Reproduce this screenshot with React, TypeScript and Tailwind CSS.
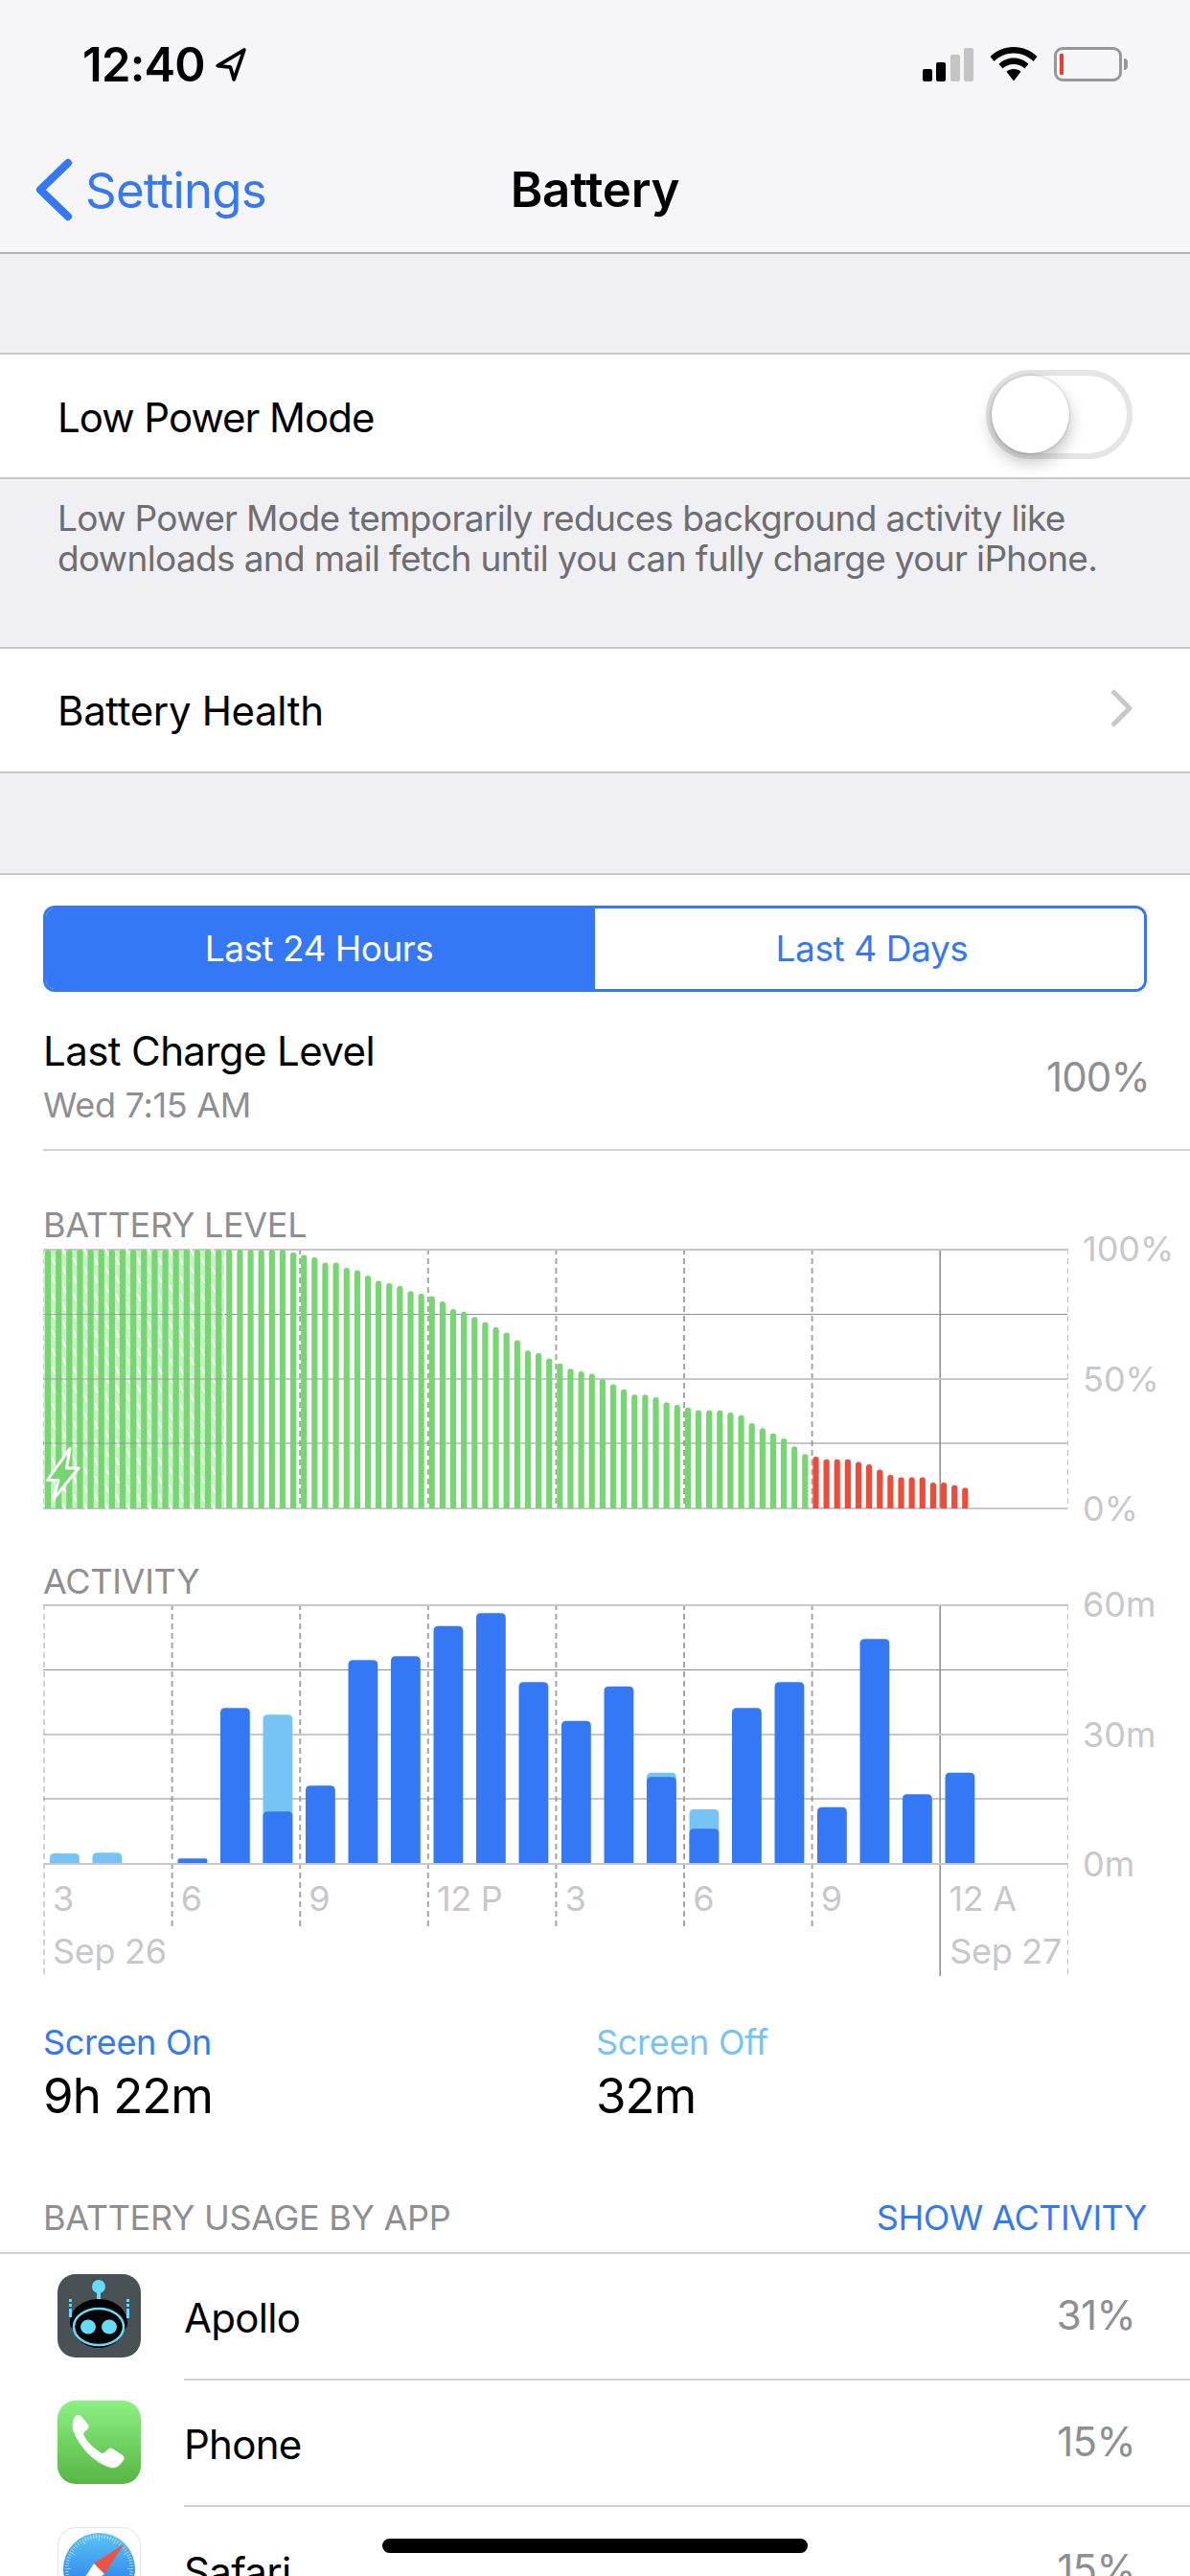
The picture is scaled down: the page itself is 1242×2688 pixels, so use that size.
import React from "react";

const FONT = "font-['Inter','Liberation_Sans',sans-serif]";

const GREEN = "#76d672";
const RED = "#ef4b38";
const BLUE = "#3478f6";
const SKY = "#76c4f6";
const STEP = 133.6;

// battery % per 15 minute slot
const level: number[] = [
  ...Array(23).fill(100),
  99, 98, 97, 95, 95, 93, 92, 90, 88, 87, 86, 84, 83, 82, 80, 77, 76, 74, 72, 70, 68, 65, 61, 60, 58, 56, 54, 53, 52,
  50, 48, 46, 44, 44, 43, 41, 40, 39, 38, 38, 38, 37, 36, 33, 31, 29, 27, 24, 21,
  20, 19, 19, 19, 18, 17, 15, 13, 12, 12, 12, 10, 10, 9, 8,
];

// [screen on px, screen off px] per hour
const activity: [number, number][] = [
  [0, 10], [0, 10.7], [0, 0], [4.7, 0], [161.7, 0], [53.7, 154.7], [80.7, 0], [211.7, 0], [215.7, 0], [247.3, 0], [260.7, 0],
  [188.7, 0], [148.3, 0], [184.3, 0], [89.7, 94.3], [35.7, 56], [161.7, 0], [188.7, 0], [58.3, 0], [233.7, 0], [71.7, 0], [94.3, 0],
];

const topRound = (x: number, y: number, w: number, h: number, r: number) =>
  `M${x} ${y + h}V${y + r}Q${x} ${y} ${x + r} ${y}H${x + w - r}Q${x + w} ${y} ${x + w} ${y + r}V${y + h}Z`;

function Grid({ tick, tall }: { tick: number; tall: number }) {
  return (
    <>
      {[0, 1, 2, 3, 4, 5, 6, 7, 8].map((i) => {
        const x = 1 + i * STEP;
        if (i === 7) return <line key={i} x1={x} x2={x} y1={0} y2={tall} stroke="#8a8a8a" strokeWidth={1.5} />;
        const edge = i === 0 || i === 8;
        return (
          <line
            key={i}
            x1={x}
            x2={x}
            y1={0}
            y2={edge ? tall : tick}
            stroke={edge ? "#c4c4c4" : "#a6a6a6"}
            strokeWidth={edge ? 1.5 : 2}
            strokeDasharray="6 4"
          />
        );
      })}
      <line x1={0} x2={1069} y1={1} y2={1} stroke="#c8c8c8" strokeWidth={2} />
      <line x1={0} x2={1069} y1={68.5} y2={68.5} stroke="#8e8e8e" strokeWidth={1.2} />
      <line x1={0} x2={1069} y1={136} y2={136} stroke="#c8c8c8" strokeWidth={2} />
      <line x1={0} x2={1069} y1={203} y2={203} stroke="#8e8e8e" strokeWidth={1.2} />
      <line x1={0} x2={1069} y1={271} y2={271} stroke="#c8c8c8" strokeWidth={2} />
    </>
  );
}

function BatteryChart() {
  const stripes: string[] = [];
  for (let i = 0; i < 17; i++) {
    const gx = 8.4 + i * 11.13;
    for (let y = (i % 2) * 9.5 - 10; y < 270; y += 19) {
      stripes.push(`${gx},${y} ${gx + 1.8},${y} ${gx + 4.9},${y + 8} ${gx + 3.1},${y + 8}`);
    }
  }
  return (
    <svg width={1070} height={272} viewBox="0 0 1070 272" className="block shrink-0">
      <Grid tick={271} tall={271} />
      <rect x={1} y={2} width={188} height={268} fill="#c8efc6" />
      {stripes.map((p) => (
        <polygon key={p} points={p} fill="#fff" />
      ))}
      {level.map((pct, i) => {
        const h = pct * 2.7;
        return (
          <path key={i} d={topRound(2 + i * 11.13, 271 - h, 6.2, h, 3)} fill={i >= 72 ? RED : GREEN} />
        );
      })}
      <line x1={0} x2={188} y1={68.5} y2={68.5} stroke="#8e8e8e" strokeOpacity={0.7} strokeWidth={1.2} />
      <line x1={0} x2={188} y1={136} y2={136} stroke="#9f9f9f" strokeOpacity={0.7} strokeWidth={1.5} />
      <line x1={0} x2={188} y1={203} y2={203} stroke="#8e8e8e" strokeOpacity={0.7} strokeWidth={1.2} />
      <path
        d="M28 208.500 4.500 241.500H16L11 261 37 229H24.500L28 208.500Z"
        fill={GREEN}
        stroke="#fff"
        strokeWidth={3}
        strokeLinejoin="round"
      />
    </svg>
  );
}

function ActivityGrid() {
  return (
    <svg width={1070} height={389} viewBox="0 0 1070 389" className="absolute left-0 top-0">
      <Grid tick={337} tall={388} />
      {activity.map(([on, off], i) => {
        const x = 7 + i * 44.5;
        return (
          <g key={i}>
            {off > 0 && <path d={topRound(x, 270 - off, 30.8, off, 5)} fill={SKY} />}
            {on > 0 && <path d={topRound(x, 270 - on, 30.8, on, on < 8 ? 2 : 5)} fill={BLUE} />}
          </g>
        );
      })}
    </svg>
  );
}

function YLabels({ items }: { items: string[] }) {
  return (
    <div className="ml-[15px] -mt-[18px] flex h-[307px] flex-col justify-between text-[36px] leading-[36px] text-[#c7c7cc]">
      {items.map((t) => (
        <span key={t}>{t}</span>
      ))}
    </div>
  );
}

function ApolloIcon() {
  return (
    <svg viewBox="0 0 87 87" className="h-full w-full">
      <rect width={87} height={87} rx={19} fill="#4a5155" />
      <circle cx={43} cy={13} r={7} fill="#66dcfb" />
      <rect x={41} y={17} width={4} height={12} fill="#66dcfb" />
      <rect x={38.5} y={27} width={9} height={3} rx={1.5} fill="#66dcfb" />
      <path d="M13 51c0-14 13-25 30-25s30 11 30 25c0 3-1 5-3 6-3 12-14 20-27 20s-24-8-27-20c-2-1-3-3-3-6Z" fill="#000" />
      <rect x={12} y={26} width={3} height={3} fill="#66dcfb" />
      <rect x={12} y={31} width={3} height={3} fill="#66dcfb" />
      <rect x={12} y={36} width={3} height={9} fill="#66dcfb" />
      <rect x={72} y={26} width={3} height={3} fill="#66dcfb" />
      <rect x={72} y={31} width={3} height={3} fill="#66dcfb" />
      <rect x={72} y={36} width={3} height={10} fill="#66dcfb" />
      <ellipse cx={43} cy={55} rx={26} ry={19} fill="none" stroke="#66dcfb" strokeWidth={2.5} />
      <ellipse cx={32} cy={55} rx={8} ry={7.5} fill="#66dcfb" />
      <ellipse cx={54} cy={55} rx={8} ry={7.5} fill="#66dcfb" />
    </svg>
  );
}

function PhoneIcon() {
  return (
    <svg viewBox="0 0 87 87" className="h-full w-full">
      <defs>
        <linearGradient id="phoneBg" x1="0" y1="0" x2="0" y2="1">
          <stop offset="0" stopColor="#8cf083" />
          <stop offset="1" stopColor="#57b644" />
        </linearGradient>
      </defs>
      <rect width={87} height={87} rx={19} fill="url(#phoneBg)" />
      <path
        d="M19 16c2-1.500 4-1.500 5.500 0l7 8.500c1.500 2 1.500 3.500 0 5l-3.500 3.500c-1 1-1 2.500-.5 3.500 4 7 10 13 18 18 1 .7 2.500.5 3.500-.5l4-3.500c1.500-1.300 3-1.300 5 0l10 6.500c2 1.500 2.200 3.500.7 5.500-3 4-7 9-12.700 7.500C40 66 24 50 17 33c-2-5-2-13 2-17Z"
        fill="#fff"
      />
    </svg>
  );
}

function SafariIcon() {
  const ticks = Array.from({ length: 72 }, (_, i) => (i * 360) / 72);
  return (
    <svg viewBox="0 0 87 87" className="h-full w-full">
      <defs>
        <linearGradient id="safariBg" x1="0" y1="0" x2="0" y2="1">
          <stop offset="0" stopColor="#5cc3f6" />
          <stop offset="1" stopColor="#1e6fe8" />
        </linearGradient>
      </defs>
      <rect x={0.5} y={0.5} width={86} height={86} rx={19} fill="#fff" stroke="#e2e2e2" />
      <circle cx={43.500} cy={43.500} r={37.500} fill="url(#safariBg)" />
      {ticks.map((a) => (
        <line
          key={a}
          x1={43.5}
          x2={43.5}
          y1={8}
          y2={a % 30 === 0 ? 14 : 11.5}
          stroke="#fff"
          strokeOpacity={0.8}
          strokeWidth={0.7}
          transform={`rotate(${a} 43.5 43.5)`}
        />
      ))}
      <polygon points="69,18 38,38 49,49" fill="#ee5240" />
      <polygon points="18,69 38,38 49,49" fill="#fff" />
    </svg>
  );
}

function AppRow({ name, pct, icon, last }: { name: string; pct: string; icon: React.ReactNode; last?: boolean }) {
  return (
    <div className="flex h-[132px] items-center pl-[60px]">
      <div className="-mt-[3px] h-[87px] w-[87px] shrink-0">{icon}</div>
      <div className={`ml-[45px] flex h-full flex-1 items-center justify-between pr-[57px] ${last ? "" : "border-b-2 border-[#d0d0d3]"}`}>
        <span className="mt-[3px] text-[42px] tracking-[-0.7px] text-black">{name}</span>
        <span className="-mt-[4px] text-[42px] tracking-[-0.7px] text-[#8e8e93]">{pct}</span>
      </div>
    </div>
  );
}

export default function App() {
  return (
    <div className={`relative h-[2688px] w-[1242px] overflow-hidden bg-white ${FONT}`}>
      {/* nav */}
      <header className="h-[265px] border-b-2 border-[#b2b2b2] bg-[#f6f6f8]">
        <div className="flex h-[132px] items-center justify-between pl-[86px] pr-[65px] pt-[2px]">
          <div className="flex items-center gap-[10px]">
            <span className="text-[49px] font-semibold leading-none tracking-[-0.8px] text-black">12:40</span>
            <svg width={33} height={35} viewBox="0 0 31 33">
              <path d="M29 2 3 17.500l12.500 1.500 3.500 12L29 2Z" fill="none" stroke="#000" strokeWidth={3.500} strokeLinejoin="round" />
            </svg>
          </div>
          <div className="flex items-center gap-[17px]">
            <div className="flex h-[35px] items-end gap-[4.500px]">
              <div className="h-[13px] w-[10px] rounded-[2px] bg-black" />
              <div className="h-[20px] w-[10px] rounded-[2px] bg-black" />
              <div className="h-[28px] w-[10px] rounded-[2px] bg-[#c4c4c4]" />
              <div className="h-[35px] w-[10px] rounded-[2px] bg-[#c4c4c4]" />
            </div>
            <svg width={50} height={36} viewBox="0 0 50 36">
              <path d="M25 0C15.500 0 7 3.800 .5 10L4.500 15C10 9.800 17 6.600 25 6.600S40 9.800 45.500 15L49.500 10C43 3.800 34.500 0 25 0Z" fill="#000" />
              <path d="M25 11.500C19 11.500 13.500 13.800 9.500 17.800L13.500 22.500C16.500 19.700 20.500 18 25 18S33.500 19.700 36.500 22.500L40.500 17.800C36.500 13.800 31 11.500 25 11.500Z" fill="#000" />
              <path d="M25 23C22 23 19.500 24 17.500 25.800L25 35.500 32.500 25.800C30.500 24 28 23 25 23Z" fill="#000" />
            </svg>
            <div className="flex items-center">
              <div className="flex h-[36px] w-[71px] items-center rounded-[9px] border-[3px] border-[#989898] pl-[3px]">
                <div className="h-[22px] w-[4px] rounded-[1px] bg-[#ef3b30]" />
              </div>
              <div className="ml-[2px] h-[12px] w-[4px] rounded-r-[4px] bg-[#989898]" />
            </div>
          </div>
        </div>
        <div className="relative flex h-[131px] items-center justify-center">
          <div className="absolute left-[36px] top-[33px] flex items-center gap-[11px]">
            <svg width={42} height={66} viewBox="0 0 42 66">
              <path d="M36 5 7 33l29 28" fill="none" stroke={BLUE} strokeWidth={8} strokeLinecap="round" strokeLinejoin="round" transform="translate(-1 0)" />
            </svg>
            <span className="text-[51px] leading-none tracking-[-0.8px] text-[#3478f6]">Settings</span>
          </div>
          <span className="text-[51px] font-semibold leading-none tracking-[-0.2px] text-black">Battery</span>
        </div>
      </header>

      <div className="h-[103px] bg-[#efeff4]" />

      {/* low power */}
      <div className="flex h-[132px] items-center justify-between border-y-2 border-[#c8c7cc] bg-white pl-[60px] pr-[60px]">
        <span className="mt-[3px] text-[42px] tracking-[-1px] text-black">Low Power Mode</span>
        <div className="-mt-[3px] h-[93px] w-[153px] rounded-full border-[6px] border-[#e5e5e5] bg-white">
          <div className="h-[81px] w-[81px] rounded-full bg-white shadow-[0_9px_18px_rgba(0,0,0,0.25),0_0_3px_rgba(0,0,0,0.25)]" />
        </div>
      </div>
      <div className="h-[175px] bg-[#efeff4] pl-[60px] pt-[20px] text-[37px] leading-[42px] tracking-[-0.65px] text-[#6d6d72]">
        Low Power Mode temporarily reduces background activity like
        <br />
        downloads and mail fetch until you can fully charge your iPhone.
      </div>

      {/* health */}
      <div className="flex h-[132px] items-center justify-between border-y-2 border-[#c8c7cc] bg-white pl-[60px] pr-[60px]">
        <span className="mt-[1px] text-[42px] tracking-[-0.35px] text-black">Battery Health</span>
        <svg width={24} height={40} viewBox="0 0 24 40" className="-mt-[4px]">
          <path d="M3 2 21 20 3 38" fill="none" stroke="#c7c7cc" strokeWidth={5} strokeLinejoin="round" />
        </svg>
      </div>

      <div className="h-[106px] border-b-2 border-[#c8c7cc] bg-[#efeff4]" />

      {/* segment */}
      <div className="px-[45px] pt-[32px]">
        <div className="flex h-[90px] overflow-hidden rounded-[12px] border-[3px] border-[#3478f6]">
          <div className="flex w-[573px] items-center justify-center bg-[#3478f6] pr-[3px] text-[37px] tracking-[-0.5px] text-white">Last 24 Hours</div>
          <div className="flex flex-1 items-center justify-center bg-white pl-[5px] text-[37px] tracking-[-0.4px] text-[#3478f6]">Last 4 Days</div>
        </div>
      </div>

      {/* last charge */}
      <div className="ml-[45px] flex h-[166px] items-center justify-between border-b-2 border-[#d0d0d3] pr-[42px]">
        <div className="mt-[15px] flex flex-col">
          <span className="text-[42px] leading-[56px] tracking-[-0.6px] text-black">Last Charge Level</span>
          <span className="text-[36px] leading-[56px] tracking-[-0.3px] text-[#8e8e93]">Wed 7:15 AM</span>
        </div>
        <span className="mt-[12px] text-[42px] tracking-[-0.8px] text-[#8e8e93]">100%</span>
      </div>

      {/* charts */}
      <div className="pl-[45px]">
        <div className="mt-[59px] mb-[7px] text-[36px] leading-[36px] tracking-[-0.3px] text-[#8e8e93]">BATTERY LEVEL</div>
        <div className="flex h-[272px] items-start">
          <BatteryChart />
          <YLabels items={["100%", "50%", "0%"]} />
        </div>

        <div className="mt-[57px] mb-[6px] text-[36px] leading-[36px] tracking-[-0.3px] text-[#8e8e93]">ACTIVITY</div>
        <div className="relative h-[389px] w-full">
          <ActivityGrid />
          <div className="absolute left-[1070px] top-0">
            <YLabels items={["60m", "30m", "0m"]} />
          </div>
          <div className="relative flex h-[389px] w-[1069px] flex-col pt-[287px] text-[36px] tracking-[-0.3px] text-[#c7c7cc]">
            <div className="grid grid-cols-8 leading-[40px]">
              {["3", "6", "9", "12 P", "3", "6", "9", "12 A"].map((t, i) => (
                <span key={i} className="pl-[10px]">
                  {t}
                </span>
              ))}
            </div>
            <div className="mt-[15px] flex justify-between pl-[10px] pr-[6px] leading-[40px]">
              <span>Sep 26</span>
              <span>Sep 27</span>
            </div>
          </div>
        </div>
      </div>

      {/* totals */}
      <div className="mt-[48px] flex pl-[45px]">
        <div className="w-[577px]">
          <div className="text-[36px] leading-[40px] tracking-[-0.3px] text-[#3478f6]">Screen On</div>
          <div className="mt-[6px] text-[51px] leading-[60px] tracking-[-1px] text-black">9h 22m</div>
        </div>
        <div>
          <div className="text-[36px] leading-[40px] tracking-[-0.3px] text-[#76c4f6]">Screen Off</div>
          <div className="mt-[6px] text-[51px] leading-[60px] tracking-[-1px] text-black">32m</div>
        </div>
      </div>

      {/* usage */}
      <div className="mt-[79px] flex h-[56px] items-start justify-between border-b-2 border-[#d0d0d3] px-[45px] text-[36px] leading-[36px] tracking-[-0.3px]">
        <span className="text-[#8e8e93]">BATTERY USAGE BY APP</span>
        <span className="tracking-[-0.5px] text-[#3478f6]">SHOW ACTIVITY</span>
      </div>
      <AppRow name="Apollo" pct="31%" icon={<ApolloIcon />} />
      <AppRow name="Phone" pct="15%" icon={<PhoneIcon />} />
      <AppRow name="Safari" pct="15%" icon={<SafariIcon />} last />

      <div className="absolute bottom-[24px] left-[399px] h-[15px] w-[444px] rounded-[8px] bg-black" />
    </div>
  );
}
